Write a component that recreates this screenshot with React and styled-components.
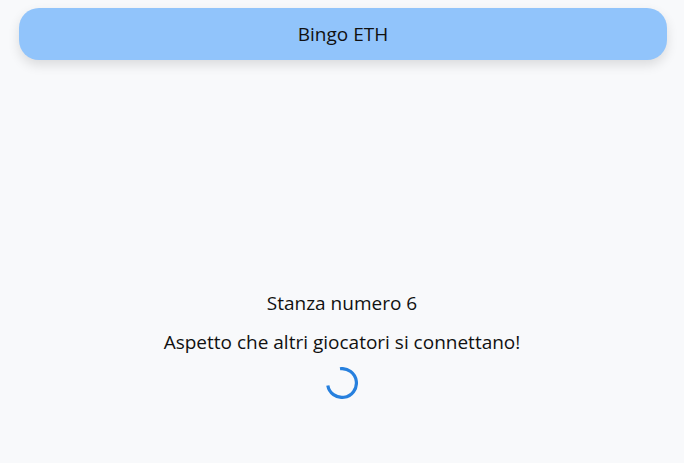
import React from "react";
import styled, { createGlobalStyle } from "styled-components";

const GlobalStyle = createGlobalStyle`
  body {
    margin: 0;
    background: #f8f9fb;
    font-family: "Open Sans", "Noto Sans", sans-serif;
    color: #111;
  }
`;

function Spinner() {
  const r = 14.4;
  const c = 2 * Math.PI * r;
  return (
    <SpinnerSvg width="32" height="32" viewBox="0 0 32 32">
      <circle
        cx="16"
        cy="16"
        r={r}
        fill="none"
        stroke="#2780de"
        strokeWidth="3.2"
        strokeDasharray={`${c * 0.74} ${c}`}
        transform="rotate(262 16 16)"
      />
    </SpinnerSvg>
  );
}

export default function App() {
  return (
    <>
      <GlobalStyle />
      <HeaderWrap>
        <Header>Bingo ETH</Header>
      </HeaderWrap>
      <Main>
        <Line>Stanza numero 6</Line>
        <Line>Aspetto che altri giocatori si connettano!</Line>
        <Spinner />
      </Main>
    </>
  );
}

const HeaderWrap = styled.div`
  padding: 8px 17px 0 19px;
`;

const Header = styled.header`
  height: 52px;
  display: flex;
  align-items: center;
  justify-content: center;
  background: #91c4fb;
  border-radius: 20px;
  box-shadow: 0 5px 12px rgba(0, 0, 0, 0.12);
  font-size: 19px;
`;

const Main = styled.main`
  display: flex;
  flex-direction: column;
  align-items: center;
  padding-top: 231px;
  gap: 15px;
`;

const Line = styled.div`
  font-size: 19px;
  line-height: 24px;
`;

const SpinnerSvg = styled.svg`
  display: block;
  margin-top: -2px;
`;
